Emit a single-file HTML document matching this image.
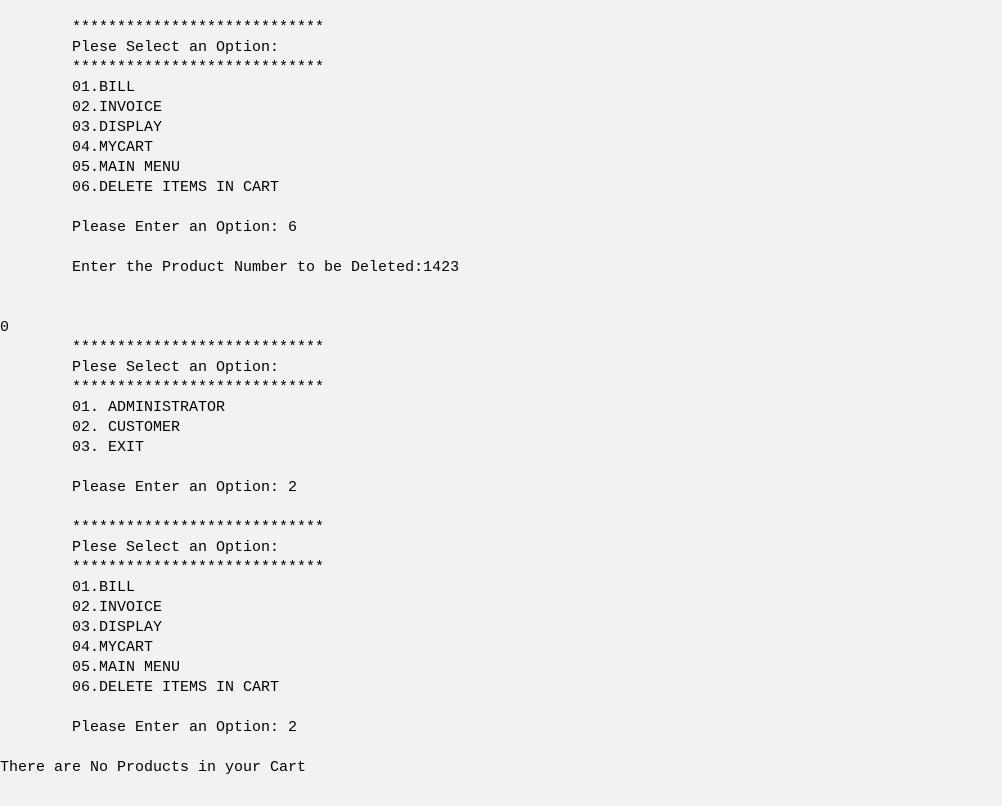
<!DOCTYPE html>
<html><head><meta charset="utf-8"><style>
html,body{margin:0;padding:0;background:#f2f2f2;width:1002px;height:806px;overflow:hidden}
pre{margin:0;position:absolute;left:0;top:18px;font-family:"Liberation Mono",monospace;font-size:15px;line-height:20px;color:#000;}
</style></head><body><pre>        ****************************
        Plese Select an Option:
        ****************************
        01.BILL
        02.INVOICE
        03.DISPLAY
        04.MYCART
        05.MAIN MENU
        06.DELETE ITEMS IN CART

        Please Enter an Option: 6

        Enter the Product Number to be Deleted:1423


0
        ****************************
        Plese Select an Option:
        ****************************
        01. ADMINISTRATOR
        02. CUSTOMER
        03. EXIT

        Please Enter an Option: 2

        ****************************
        Plese Select an Option:
        ****************************
        01.BILL
        02.INVOICE
        03.DISPLAY
        04.MYCART
        05.MAIN MENU
        06.DELETE ITEMS IN CART

        Please Enter an Option: 2

There are No Products in your Cart</pre></body></html>
